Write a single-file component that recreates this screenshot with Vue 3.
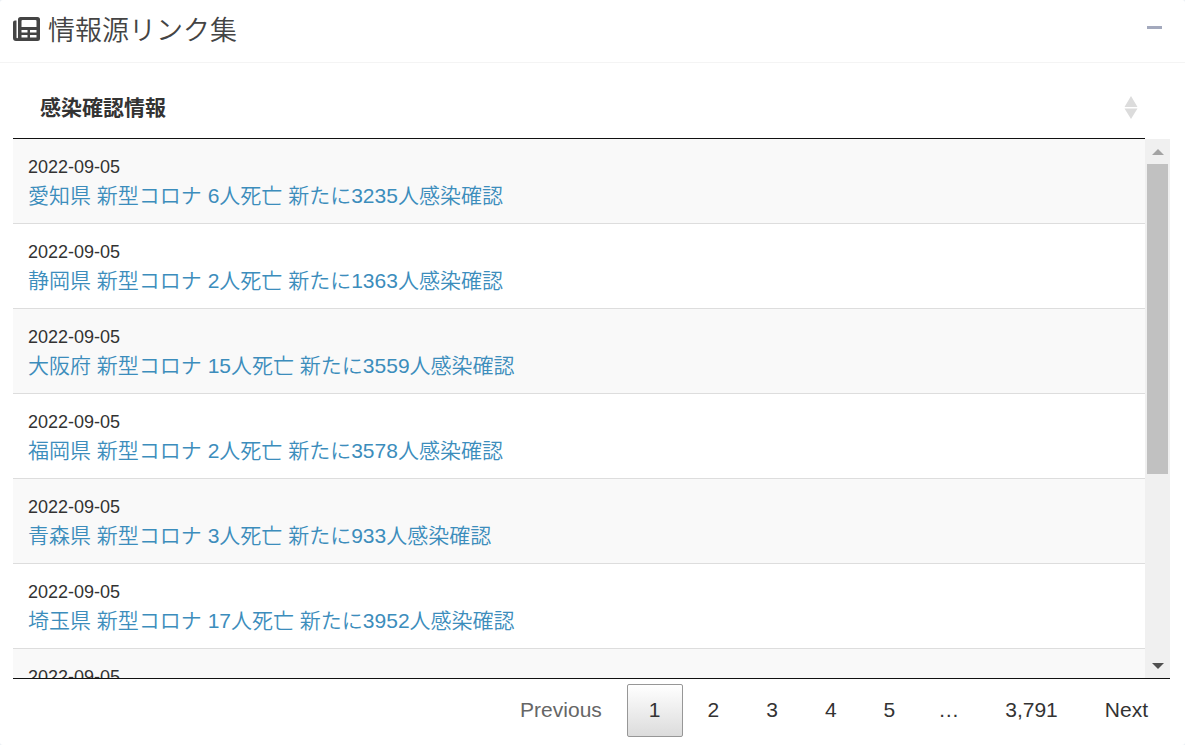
<template>
  <section class="box">
    <header class="box-header">
      <h3 class="box-title">
        <svg class="icon" viewBox="0 0 27 24" aria-hidden="true">
          <path
            fill-rule="evenodd"
            d="M7.5 0H24.5Q27 0 27 2.5V21.5Q27 24 24.5 24H3Q0 24 0 21V5.500Q0 3.500 2 3.500H3.500V20.500Q3.500 21.200 4.200 21.200Q5 21.200 5 20.500V2.500Q5 0 7.500 0ZM9.500 3Q8.500 3 8.500 4V10H23.500V4Q23.500 3 22.500 3ZM8.500 13V15.500H14.500V13ZM17 13V15.500H23.500V13ZM8.500 18V20.500H14.500V18ZM17 18V20.500H23.500V18Z"
          />
        </svg>
        <span>情報源リンク集</span>
      </h3>
      <button class="btn-tool" type="button" aria-label="折りたたむ" @click="open = !open">
        <span class="minus"></span>
      </button>
    </header>

    <div v-if="open" class="box-body">
      <table class="head-table">
        <thead>
          <tr>
            <th scope="col">
              <div class="th-inner">
                <span>感染確認情報</span>
                <svg class="sort" viewBox="0 0 14 24" aria-hidden="true">
                  <path d="M7 0L13.500 11H0.500ZM0.500 12.500H13.500L7 23Z" />
                </svg>
              </div>
            </th>
          </tr>
        </thead>
      </table>

      <div class="scroll-wrap">
        <div ref="scroller" class="scroll-body" @scroll="onScroll">
          <table class="data-table">
            <tbody>
              <tr v-for="item in items" :key="item.title">
                <td>
                  <div class="date">{{ item.date }}</div>
                  <a href="#">{{ item.title }}</a>
                </td>
              </tr>
            </tbody>
          </table>
        </div>
        <div class="scrollbar">
          <button class="arrow up" type="button" aria-label="上へ" @click="move(-85)"></button>
          <div class="track">
            <div class="thumb" :style="{ marginTop: thumbTop + 'px' }"></div>
          </div>
          <button class="arrow down" type="button" aria-label="下へ" @click="move(85)"></button>
        </div>
      </div>

      <nav class="pagination">
        <button class="page" type="button" :disabled="page === 1" @click="page--">Previous</button>
        <button
          v-for="n in 5"
          :key="n"
          class="page"
          :class="{ current: n === page }"
          type="button"
          @click="page = n"
        >
          {{ n }}
        </button>
        <span class="ellipsis">…</span>
        <button class="page" type="button" @click="page = lastPage">
          {{ lastPage.toLocaleString('en-US') }}
        </button>
        <button class="page" type="button" :disabled="page === lastPage" @click="page++">Next</button>
      </nav>
    </div>
  </section>
</template>

<script setup>
import { ref } from 'vue';

const open = ref(true);
const page = ref(1);
const lastPage = 3791;

const items = [
  { date: '2022-09-05', title: '愛知県 新型コロナ 6人死亡 新たに3235人感染確認' },
  { date: '2022-09-05', title: '静岡県 新型コロナ 2人死亡 新たに1363人感染確認' },
  { date: '2022-09-05', title: '大阪府 新型コロナ 15人死亡 新たに3559人感染確認' },
  { date: '2022-09-05', title: '福岡県 新型コロナ 2人死亡 新たに3578人感染確認' },
  { date: '2022-09-05', title: '青森県 新型コロナ 3人死亡 新たに933人感染確認' },
  { date: '2022-09-05', title: '埼玉県 新型コロナ 17人死亡 新たに3952人感染確認' },
  { date: '2022-09-05', title: '新型コロナ 感染確認' },
];

// スクロールバーの位置
const scroller = ref(null);
const thumbTop = ref(0);

const onScroll = () => {
  const el = scroller.value;
  const max = el.scrollHeight - el.clientHeight;
  thumbTop.value = max > 0 ? Math.round((el.scrollTop / max) * 179) : 0;
};

const move = (y) => {
  scroller.value.scrollBy(0, y);
};
</script>

<style>
body {
  background: #ecf0f5;
}
</style>

<style scoped>
.box {
  min-height: 100vh;
  box-sizing: border-box;
  background: #fff;
  border-radius: 3px;
  color: #333;
  font-family: 'Liberation Sans', 'Noto Sans CJK JP', sans-serif;
  font-size: 21px;
  line-height: 30px;
}

button {
  padding: 0;
  border: none;
  background: none;
  color: inherit;
  font: inherit;
  cursor: pointer;
}

.box-header {
  display: flex;
  align-items: center;
  justify-content: space-between;
  height: 62px;
  padding: 0 23px 0 13px;
  border-bottom: 1px solid #f4f4f4;
}

.box-title {
  display: flex;
  align-items: center;
  gap: 8px;
  margin: 0;
  padding-bottom: 4px;
  color: #444;
  font-size: 27px;
  font-weight: 350;
}

.box-title span {
  padding-top: 4px;
}

.icon {
  width: 27px;
  height: 24px;
  fill: #444;
}

.btn-tool {
  display: flex;
  align-items: center;
  height: 30px;
  padding-bottom: 7px;
}

.minus {
  width: 15px;
  height: 3px;
  background: #a3a9bd;
}

.box-body {
  padding: 15px 15px 0 13px;
}

.head-table,
.data-table {
  width: 100%;
  border-collapse: collapse;
}

.head-table {
  width: calc(100% - 25px);
}

th {
  padding: 15px 7px 15px 27px;
  border-bottom: 1px solid #111;
  text-align: left;
}

.th-inner {
  display: flex;
  align-items: center;
  justify-content: space-between;
}

.sort {
  width: 14px;
  height: 24px;
  fill: #dcdcdc;
}

.scroll-wrap {
  display: flex;
  border-bottom: 1px solid #111;
}

.scroll-body {
  flex: 1;
  height: 539px;
  overflow-y: auto;
  scrollbar-width: none;
}

td {
  padding: 14px 15px 13px;
  border-bottom: 1px solid #ddd;
}

tr:nth-child(odd) td {
  background: #f9f9f9;
}

.date {
  font-size: 18px;
  line-height: 28px;
}

td a {
  display: block;
  color: #3c8dbc;
  font-weight: 350;
  line-height: 29px;
  text-decoration: none;
}

.scrollbar {
  display: flex;
  flex-direction: column;
  width: 25px;
  background: #f0f0f0;
}

.track {
  flex: 1;
}

.thumb {
  height: 310px;
  margin: 0 2px;
  background: #c1c1c1;
}

.arrow {
  display: flex;
  align-items: center;
  justify-content: center;
  height: 25px;
}

.arrow::before {
  content: '';
  border: 6px solid transparent;
}

.up::before {
  border-top: none;
  border-bottom-color: #a3a3a3;
}

.down::before {
  border-bottom: none;
  border-top-color: #505050;
}

.pagination {
  display: flex;
  justify-content: flex-end;
  gap: 3px;
  padding-top: 5px;
  line-height: 29px;
}

.page {
  padding: 10px 21px 12px;
  border: 1px solid transparent;
  border-radius: 2px;
}

.page:disabled {
  color: #666;
  cursor: default;
}

.page.current {
  border-color: #979797;
  background: linear-gradient(to bottom, #fff 0%, #dcdcdc 100%);
}

.ellipsis {
  margin-left: -3px;
  padding: 11px 21px;
}
</style>
